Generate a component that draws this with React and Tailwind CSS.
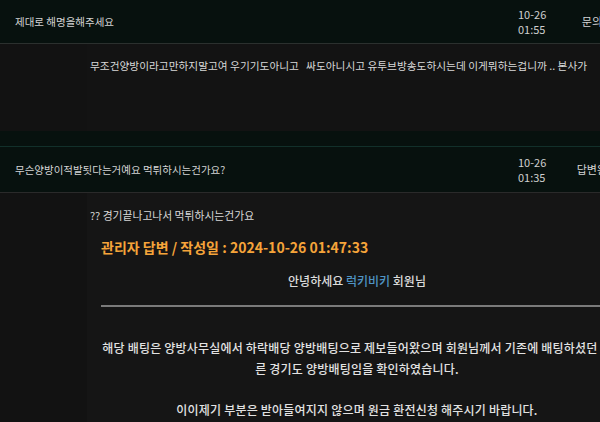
export default function App() {
  const font = "font-['Noto_Sans_CJK_KR','Noto_Sans',sans-serif]";
  return (
    <div className={`w-[600px] h-[422px] overflow-hidden bg-[#07110e] ${font}`}>
      <div className="w-[640px]">
        {/* Row 1 header */}
        <div className="flex h-[44px] items-center border-b border-[#2b302e] bg-[#07110e] text-[#d4d4d4]">
          <div className="w-[505px] pl-[15px] text-[10.5px] whitespace-nowrap">제대로 해명을해주세요</div>
          <div className="w-[62px] pl-[13px] text-[11px] leading-[15px] text-[#cfcfcf]">
            <div>10-26</div>
            <div>01:55</div>
          </div>
          <div className="w-[60px] text-center text-[11px] whitespace-nowrap">문의중</div>
        </div>
        {/* Content 1 */}
        <div className="flex h-[87px] bg-[#131313]">
          <div className="w-[87px] bg-[#121212]"></div>
          <div className="flex-1 pl-[3px] pt-[14px] text-[10.7px] leading-[16px] text-[#d8d8d8] whitespace-pre">
            무조건양방이라고만하지말고여 우기기도아니고   싸도아니시고 유투브방송도하시는데 이게뭐하는겁니까 .. 본사가
          </div>
        </div>
        {/* spacer */}
        <div className="h-[16px] border-b border-[#12302a] bg-[#07110e]"></div>
        {/* Row 2 header */}
        <div className="flex h-[46px] items-center border-b border-[#2a2a2a] bg-[#07110e] text-[#d4d4d4]">
          <div className="w-[505px] pl-[15px] text-[10.5px] whitespace-nowrap">무슨양방이적발됫다는거예요 먹튀하시는건가요?</div>
          <div className="w-[62px] pl-[13px] text-[11px] leading-[15px] text-[#cfcfcf]">
            <div>10-26</div>
            <div>01:35</div>
          </div>
          <div className="w-[60px] text-center text-[11px] whitespace-nowrap">답변완료</div>
        </div>
        {/* Content 2 */}
        <div className="flex h-[240px] bg-[#131313]">
          <div className="w-[87px] bg-[#121212]"></div>
          <div className="flex-1 pl-[3px] bg-[#151515]">
            <div className="mt-[14px] text-[10.8px] leading-[16px] text-[#d8d8d8] whitespace-nowrap">?? 경기끝나고나서 먹튀하시는건가요</div>
            <div className="ml-[11px] w-[512px]">
              <div className="mt-[15px] text-[14px] leading-[18px] font-bold text-[#f5a43a] whitespace-nowrap">관리자 답변 / 작성일 : 2024-10-26 01:47:33</div>
              <div className="mt-[15px] text-center text-[12px] leading-[20px] font-medium text-[#dcdcdc]">
                안녕하세요 <span className="text-[#4f94c4]">럭키비키</span> 회원님
              </div>
              <div className="mt-[14px] border-t-2 border-[#7a7a7a]"></div>
              <div className="mt-[31px] text-center text-[12px] tracking-[0.2px] leading-[20.5px] font-medium text-[#e2e2e2] break-all">
                해당 배팅은 양방사무실에서 하락배당 양방배팅으로 제보들어왔으며 회원님께서 기존에 배팅하셨던 다른 경기도 양방배팅임을 확인하였습니다.
                <br />
                <br />
                이이제기 부분은 받아들여지지 않으며 원금 환전신청 해주시기 바랍니다.
              </div>
            </div>
          </div>
        </div>
      </div>
    </div>
  );
}
